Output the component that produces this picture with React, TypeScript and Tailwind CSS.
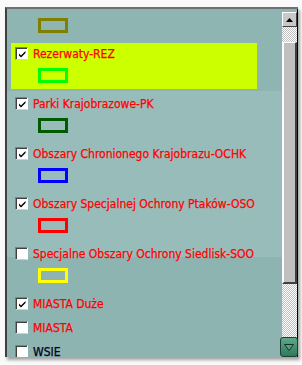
const items: { label: string; checked: boolean; rect?: string; dark?: boolean; active?: boolean }[] = [
  { label: "Rezerwaty-REZ", checked: true, rect: "border-[#00ff00]", active: true },
  { label: "Parki Krajobrazowe-PK", checked: true, rect: "border-[#005a00]" },
  { label: "Obszary Chronionego Krajobrazu-OCHK", checked: true, rect: "border-[#0000ff]" },
  { label: "Obszary Specjalnej Ochrony Ptaków-OSO", checked: true, rect: "border-[#ff0000]" },
  { label: "Specjalne Obszary Ochrony Siedlisk-SOO", checked: false, rect: "border-[#ffff00]" },
  { label: "MIASTA Duże", checked: true },
  { label: "MIASTA", checked: false },
  { label: "WSIE", checked: false, dark: true },
];

function Checkbox({ checked }: { checked: boolean }) {
  return (
    <div className="h-[13px] w-[13px] shrink-0 border-t border-l border-[#808080] border-r border-b border-r-white border-b-[#d4d0c8]">
      <div className="h-full w-full border-t border-l border-[#404040] bg-white">
        {checked && (
          <svg width="11" height="11" viewBox="0 0 11 11">
            <path d="M2 4.5 L4 6.5 L8.5 2 L8.5 4 L4 8.5 L2 6.5 Z" fill="#000" />
          </svg>
        )}
      </div>
    </div>
  );
}

function Checker({ className }: { className: string }) {
  return (
    <div
      className={`w-full bg-white bg-[linear-gradient(45deg,#c0c0c0_25%,transparent_25%,transparent_75%,#c0c0c0_75%),linear-gradient(45deg,#c0c0c0_25%,transparent_25%,transparent_75%,#c0c0c0_75%)] bg-[length:2px_2px] bg-[position:0_0,1px_1px] ${className}`}
    />
  );
}

function Scrollbar() {
  return (
    <div className="flex w-[16px] shrink-0 flex-col pt-[3px] border-r border-black">
      <div className="flex h-[15px] w-[15px] items-center justify-center border-t border-l border-white border-r border-b border-r-[#404040] border-b-[#404040] bg-[#c8c8c8]">
        <svg width="7" height="4" viewBox="0 0 7 4">
          <path d="M3.5 0 L7 4 L0 4 Z" fill="#000" />
        </svg>
      </div>
      <Checker className="h-[15px]" />
      <div className="h-[242px] w-[15px] border-t border-l-2 border-white border-r-2 border-b-2 border-r-[#404040] border-b-[#404040] bg-[#c0c0c0]" />
      <Checker className="flex-1" />
      <div className="-ml-[2px] flex h-[20px] w-[18px] items-center justify-center rounded-[3px] border border-[#1b3f33] bg-[linear-gradient(#5fa88a,#2f7a5c)]">
        <svg width="10" height="7" viewBox="0 0 10 7">
          <path d="M0.5 0.5 L9.5 0.5 L5 6.5 Z" fill="#5a9c84" stroke="#123428" strokeWidth="1" />
        </svg>
      </div>
    </div>
  );
}

export default function App() {
  return (
    <div className="h-[365px] w-[302px] overflow-hidden bg-[#fafafa] pl-[5px] pt-[7px] font-['DejaVu_Sans_Condensed','DejaVu_Sans',sans-serif] text-[12px]">
      <div className="flex h-[350px] w-[293px] border-t-2 border-l-2 border-t-[#707070] border-l-[#404040] bg-[linear-gradient(#8eb5b2_0px,#8eb5b2_82px,#97bcba_82px,#97bcba_248px,#8db4b1_248px)] shadow-[2px_3px_3px_rgba(0,0,0,0.35)]">
        <div className="flex flex-1 flex-col gap-[4px] overflow-hidden pt-[9px]">
          <div className="pl-[31px] pb-[6px]">
            <div className="h-[15px] w-[30px] border-[3px] border-[#808000]" />
          </div>
          {items.map((it) => (
            <div
              key={it.label}
              className={`ml-[4px] w-[246px] px-[4px] pt-[4px] ${it.rect ? "pb-[6px]" : "pb-[3px]"} ${it.active ? "bg-[#ccff00]" : ""}`}
            >
              <div className="flex h-[13px] items-center gap-[5px]">
                <Checkbox checked={it.checked} />
                <span className={`whitespace-nowrap leading-none [-webkit-text-stroke:0.25px_currentColor] ${it.dark ? "text-[#000022]" : "text-[#ff0000]"}`}>
                  {it.label}
                </span>
              </div>
              {it.rect && (
                <div className="pl-[23px] pt-[8px]">
                  <div className={`h-[15px] w-[30px] border-[3px] ${it.rect}`} />
                </div>
              )}
            </div>
          ))}
        </div>
        <Scrollbar />
      </div>
    </div>
  );
}
